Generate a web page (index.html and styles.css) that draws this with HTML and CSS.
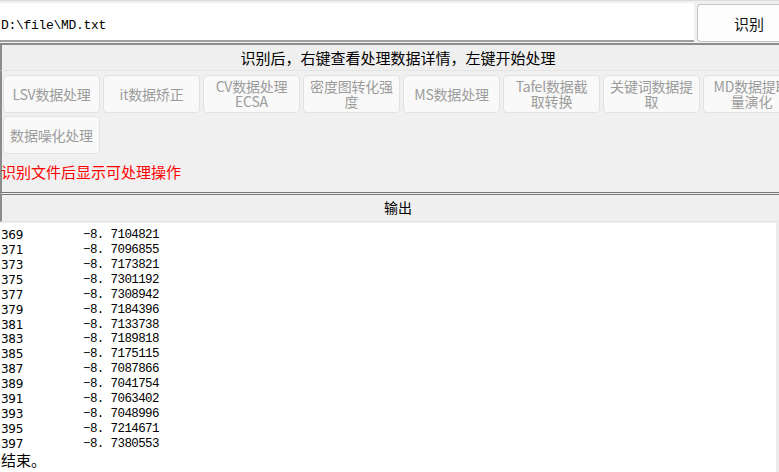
FILE: index.html
```html
<!DOCTYPE html>
<html lang="zh-CN">
<head>
   <meta charset="UTF-8">
   <title>数据处理</title>
   <link rel="stylesheet" href="styles.css">
</head>
<body>

<div class="top-row">
   <div class="path-box">D:\file\MD.txt</div>
   <button class="scan-btn">识别</button>
</div>

<div class="bar tip-bar">识别后，右键查看处理数据详情，左键开始处理</div>

<div class="ops-panel">
   <div class="ops">
       <button class="op">LSV数据处理</button>
       <button class="op">it数据矫正</button>
       <button class="op two">CV数据处理<br>ECSA</button>
       <button class="op two">密度图转化强<br>度</button>
       <button class="op">MS数据处理</button>
       <button class="op two">Tafel数据截<br>取转换</button>
       <button class="op two">关键词数据提<br>取</button>
       <button class="op two">MD数据提取<br>量演化</button>
       <button class="op">数据噪化处理</button>
   </div>
   <p class="hint">识别文件后显示可处理操作</p>
</div>

<div class="bar out-bar">输出</div>

<div class="output">
   <div class="log" id="log"></div>
   <div class="scroll-track"></div>
</div>

<script>
   // 输出窗口的数据行
   const rows = [
       ['369', '-8.7104821'], ['371', '-8.7096855'], ['373', '-8.7173821'],
       ['375', '-8.7301192'], ['377', '-8.7308942'], ['379', '-8.7184396'],
       ['381', '-8.7133738'], ['383', '-8.7189818'], ['385', '-8.7175115'],
       ['387', '-8.7087866'], ['389', '-8.7041754'], ['391', '-8.7063402'],
       ['393', '-8.7048996'], ['395', '-8.7214671'], ['397', '-8.7380553']
   ];
   const log = document.getElementById('log');
   rows.forEach(r => {
       const line = document.createElement('div');
       line.className = 'line';
       line.innerHTML = '<span class="idx">' + r[0] + '</span><span class="val">' + r[1].replace('-', '−').replace('.', '. ') + '</span>';
       log.appendChild(line);
   });
   const end = document.createElement('div');
   end.className = 'line end';
   end.innerText = '结束。';
   log.appendChild(end);
</script>

</body>
</html>
```

FILE: styles.css
```css
body {
    margin: 0;
    background-color: #f0f0f0;
    font-family: "Noto Sans CJK SC", sans-serif;
    color: #000;
    width: 779px;
    height: 472px;
    overflow: hidden;
}
.top-row {
    display: flex;
    height: 42px;
    padding-top: 2px;
    box-sizing: border-box;
    border-top: 1px solid #dcdcdc;
}
.path-box {
    width: 697px;
    background-color: #fff;
    border-bottom: 2px solid #a0a0a0;
    box-sizing: border-box;
    font-family: "Liberation Mono", monospace;
    font-size: 13px;
    letter-spacing: -0.3px;
    line-height: 40px;
    padding: 3px 0 0 1px;
}
.scan-btn {
    margin-left: 3px;
    width: 82px;
    height: 38px;
    margin-top: 1px;
    background-color: #fdfdfd;
    border: 1px solid #c4c4c4;
    border-right: none;
    border-radius: 4px 0 0 4px;
    font-family: "Noto Sans CJK SC", sans-serif;
    font-size: 15px;
    text-align: right;
    padding: 0 15px 0 0;
    color: #111;
}
.bar {
    background-color: #efefef;
    border-top: 2px solid #8c8c8c;
    border-left: 2px solid #8c8c8c;
    border-bottom: 1px solid #e4e4e4;
    text-align: center;
    box-sizing: border-box;
    padding-left: 15px;
}
.tip-bar {
    margin-top: 1px;
    height: 28px;
    font-size: 15px;
    line-height: 25px;
}
.ops-panel {
    height: 121px;
    border-left: 2px solid #8c8c8c;
    box-sizing: border-box;
    padding: 4px 0 0 1px;
}
.ops {
    display: flex;
    flex-wrap: wrap;
    gap: 3px;
    width: 800px;
}
.op {
    width: 97px;
    height: 38px;
    background-color: #f9f9f9;
    border: 1px solid #e2e2e2;
    border-radius: 4px;
    color: #9c9c9c;
    font-family: "Noto Sans CJK SC", sans-serif;
    font-size: 14px;
    letter-spacing: -0.2px;
    padding: 0;
    line-height: 16px;
}
.op.two {
    line-height: 15px;
    padding-bottom: 1px;
}
.hint {
    margin: 8px 0 0 -2px;
    color: #ff0000;
    font-size: 15px;
    line-height: 20px;
}
.out-bar {
    height: 30px;
    border-top: 3px double #777;
    font-size: 14px;
    line-height: 24px;
}
.output {
    display: flex;
    height: 250px;
    margin-top: 1px;
}
.log {
    flex: 1;
    background-color: #fff;
    padding-top: 5px;
}
.scroll-track {
    width: 3px;
    background-color: #ececec;
}
.line {
    height: 14.93px;
    font-size: 13px;
    line-height: 15px;
    display: flex;
    padding-left: 1px;
}
.idx {
    width: 82px;
    font-family: "DejaVu Sans", sans-serif;
    font-size: 12px;
    letter-spacing: -0.3px;
}
.val {
    font-family: "Liberation Mono", monospace;
    font-size: 12.5px;
    letter-spacing: -0.6px;
}
.end {
    font-size: 15px;
    line-height: 16px;
    height: 16px;
}
```
